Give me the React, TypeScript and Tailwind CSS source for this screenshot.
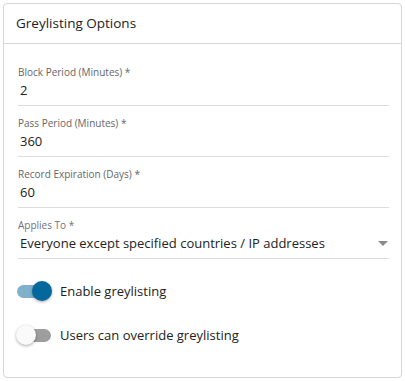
const fields = [
  { label: 'Block Period (Minutes)', value: '2' },
  { label: 'Pass Period (Minutes)', value: '360' },
  { label: 'Record Expiration (Days)', value: '60' },
];

function Toggle({ on }: { on: boolean }) {
  return (
    <div className="relative w-[36px] h-[20px] flex items-center -ml-[2px]">
      <div className={`w-[34px] h-[13px] ml-[1px] rounded-full ${on ? 'bg-[#7fb1cc]' : 'bg-[#9e9e9e]'}`} />
      <div
        className={`absolute top-0 w-[20px] h-[20px] rounded-full shadow-[0_1px_3px_rgba(0,0,0,0.35)] ${
          on ? 'left-[16px] bg-[#03689c]' : 'left-0 bg-[#fafafa]'
        }`}
      />
    </div>
  );
}

export default function App() {
  return (
    <div className="w-[405px] h-[381px] bg-white p-[3px]" style={{ fontFamily: '"Open Sans", sans-serif' }}>
      <div className="h-full rounded-[4px] border border-[#d6d6d6] bg-white flex flex-col">
        {/* header */}
        <div className="h-[40px] border-b border-[#d6d6d6] flex items-center px-[12px]">
          <span className="text-[13.5px] text-[#222]">Greylisting Options</span>
        </div>

        <div className="pl-[14px] pr-[12px] pt-[20px] flex flex-col">
          {fields.map((f) => (
            <div key={f.label} className="border-b border-[#dcdcdc] mb-[9px]">
              <div className="text-[10px] leading-[16px] text-[#666]">
                {f.label} <span>*</span>
              </div>
              <div className="text-[13px] leading-[20px] text-[#222] px-[2px] pb-[5px]">{f.value}</div>
            </div>
          ))}

          <div className="border-b border-[#dcdcdc]">
            <div className="text-[10px] leading-[16px] text-[#74707a]">Applies To *</div>
            <div className="flex items-center justify-between pb-[5px] pl-[2px]">
              <span className="text-[13px] leading-[20px] text-[#222]">
                Everyone except specified countries / IP addresses
              </span>
              <svg width="10" height="5" viewBox="0 0 10 5" className="mr-[1px]">
                <path d="M0 0 L10 0 L5 5 Z" fill="#8a8a8a" />
              </svg>
            </div>
          </div>

          <div className="mt-[22px] flex flex-col gap-[24px]">
            <div className="flex items-center gap-[8px]">
              <Toggle on />
              <span className="text-[13px] leading-[20px] text-[#222]">Enable greylisting</span>
            </div>
            <div className="flex items-center gap-[8px]">
              <Toggle on={false} />
              <span className="text-[13px] leading-[20px] text-[#222]">Users can override greylisting</span>
            </div>
          </div>
        </div>
      </div>
    </div>
  );
}
